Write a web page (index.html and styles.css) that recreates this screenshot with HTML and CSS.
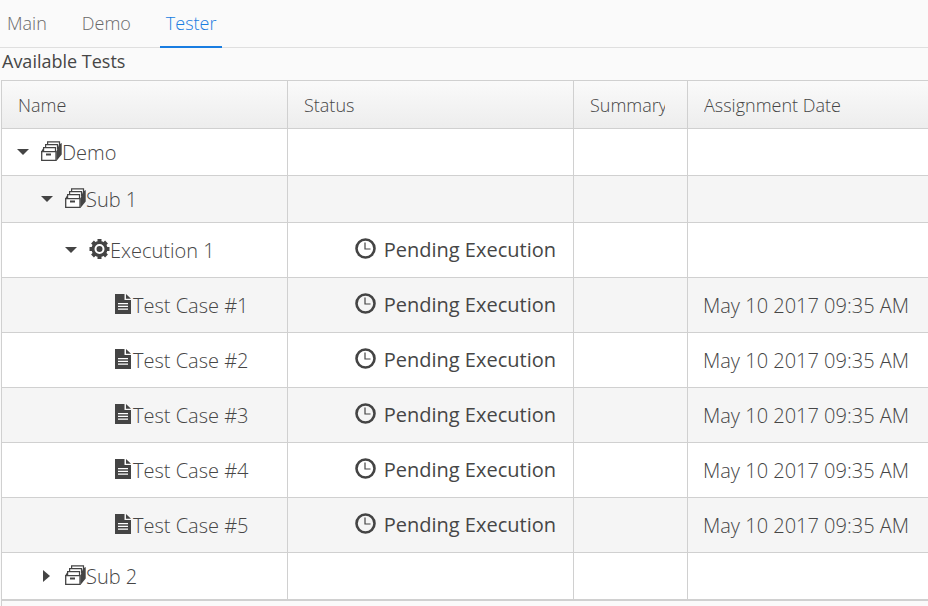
FILE: index.html
```html
<!DOCTYPE html>
<html lang="en">
    <head>
        <meta charset="utf-8">
        <title>Tester</title>
        <link rel="stylesheet" href="styles.css">
    </head>
    <body>

    <!-- shared icons -->
    <svg class="sprite" aria-hidden="true">
        <symbol id="archives" viewBox="0 0 21 20">
            <path fill="#fff" stroke="#444" stroke-width="1.200" d="M6.600 4V.8h11.900V5M4.600 7V3.700h11.900V8M2.600 10V6.600h11.900V10"/>
            <path fill="#444" d="M15.400 10.500L18 3.500 20.700 2v11.500L15.400 20zM0 10.800L2 7.500h1v3.300z"/>
            <path fill="#fff" stroke="#444" stroke-width="1.300" d="M.7 10.700h14.300v8.600H.7z"/>
            <path fill="#444" d="M5 12.500h5v2H5z"/>
        </symbol>
        <symbol id="cog" viewBox="0 0 20 20">
            <path stroke="#444" stroke-width="4" d="M10 0v20M0 10h20"/>
            <path stroke="#444" stroke-width="4" d="M3 3l14 14M17 3L3 17"/>
            <circle cx="10" cy="10" r="8" fill="#444"/>
            <circle cx="10" cy="10" r="4" fill="#444" stroke="#fff" stroke-width="2"/>
        </symbol>
        <symbol id="file" viewBox="0 0 16 20">
            <path fill="#444" d="M0 0h9.500v6H16v14H0zM11 0l5 4.700h-5z"/>
            <path stroke="#fff" stroke-width="1.200" d="M3 9.600h10M3 12.400h10M3 15.200h10"/>
        </symbol>
        <symbol id="clock" viewBox="0 0 21 21">
            <circle cx="10.500" cy="10.500" r="9" fill="none" stroke="#444" stroke-width="2.600"/>
            <path fill="none" stroke="#444" stroke-width="1.200" d="M10 4.500v6.500h5.500"/>
        </symbol>
    </svg>

    <div class="tabs" role="tablist">
        <button class="tab" role="tab">Main</button>
        <button class="tab" role="tab">Demo</button>
        <button class="tab selected" role="tab" aria-selected="true">Tester</button>
    </div>

    <table class="tests">
        <caption>Available Tests</caption>
        <colgroup>
            <col class="col-name">
            <col class="col-status">
            <col class="col-summary">
            <col>
        </colgroup>
        <thead>
            <tr>
                <th><div class="head">Name</div></th>
                <th><div class="head">Status</div></th>
                <th><div class="head">Summary</div></th>
                <th><div class="head">Assignment Date</div></th>
            </tr>
        </thead>
        <tbody>
            <tr class="folder">
                <td><div class="node level1"><button class="toggle open" aria-label="Collapse Demo"></button><svg class="icon"><use href="#archives"/></svg>Demo</div></td>
                <td></td>
                <td></td>
                <td></td>
            </tr>
            <tr class="folder">
                <td><div class="node level2"><button class="toggle open" aria-label="Collapse Sub 1"></button><svg class="icon"><use href="#archives"/></svg>Sub 1</div></td>
                <td></td>
                <td></td>
                <td></td>
            </tr>
            <tr>
                <td><div class="node level3"><button class="toggle open" aria-label="Collapse Execution 1"></button><svg class="icon"><use href="#cog"/></svg>Execution 1</div></td>
                <td><div class="status"><svg class="clock"><use href="#clock"/></svg>Pending Execution</div></td>
                <td></td>
                <td></td>
            </tr>
            <tr>
                <td><div class="node level4"><svg class="file"><use href="#file"/></svg>Test Case #1</div></td>
                <td><div class="status"><svg class="clock"><use href="#clock"/></svg>Pending Execution</div></td>
                <td></td>
                <td>May 10 2017 09:35 AM</td>
            </tr>
            <tr>
                <td><div class="node level4"><svg class="file"><use href="#file"/></svg>Test Case #2</div></td>
                <td><div class="status"><svg class="clock"><use href="#clock"/></svg>Pending Execution</div></td>
                <td></td>
                <td>May 10 2017 09:35 AM</td>
            </tr>
            <tr>
                <td><div class="node level4"><svg class="file"><use href="#file"/></svg>Test Case #3</div></td>
                <td><div class="status"><svg class="clock"><use href="#clock"/></svg>Pending Execution</div></td>
                <td></td>
                <td>May 10 2017 09:35 AM</td>
            </tr>
            <tr>
                <td><div class="node level4"><svg class="file"><use href="#file"/></svg>Test Case #4</div></td>
                <td><div class="status"><svg class="clock"><use href="#clock"/></svg>Pending Execution</div></td>
                <td></td>
                <td>May 10 2017 09:35 AM</td>
            </tr>
            <tr>
                <td><div class="node level4"><svg class="file"><use href="#file"/></svg>Test Case #5</div></td>
                <td><div class="status"><svg class="clock"><use href="#clock"/></svg>Pending Execution</div></td>
                <td></td>
                <td>May 10 2017 09:35 AM</td>
            </tr>
            <tr class="folder">
                <td><div class="node level2"><button class="toggle" aria-label="Expand Sub 2"></button><svg class="icon"><use href="#archives"/></svg>Sub 2</div></td>
                <td></td>
                <td></td>
                <td></td>
            </tr>
        </tbody>
        <tfoot>
            <tr><td colspan="4"></td></tr>
        </tfoot>
    </table>

    </body>
</html>
```
FILE: styles.css
```css
* {
    box-sizing: border-box;
}
body {
    margin: 0;
    background-color: #fafafa;
    color: #464646;
    font-family: "Open Sans", sans-serif;
    font-size: 20px;
    font-weight: 300;
    overflow: hidden;
}
.sprite {
    display: none;
}
.tabs {
    display: flex;
    gap: 23px;
    height: 48px;
    padding-left: 1px;
    box-shadow: inset 0 -1px #dfdfdf;
}
.tab {
    padding: 0 6px;
    border: none;
    border-bottom: 2px solid transparent;
    background: none;
    color: #696969;
    font: inherit;
    font-size: 18px;
}
.tab.selected {
    border-color: #197de1;
    color: #197de1;
}
.tests {
    width: 100%;
    padding-left: 1px;
    table-layout: fixed;
    border-spacing: 0;
}
.tests caption {
    height: 32px;
    padding-left: 2px;
    font-size: 18px;
    font-weight: 400;
    line-height: 26px;
    text-align: left;
}
.col-name {
    width: 287px;
}
.col-status {
    width: 286px;
}
.col-summary {
    width: 114px;
}
.tests th {
    height: 49px;
    padding: 0 22px 0 16px;
    border-top: 1px solid #d0d0d0;
    border-right: 1px solid #d0d0d0;
    border-bottom: 1px solid #d0d0d0;
    background: linear-gradient(#fafafa, #ededed);
    font-size: 18px;
    font-weight: 300;
    text-align: left;
}
.head {
    overflow: hidden;
    white-space: nowrap;
}
.tests td {
    height: 55px;
    padding: 0 0 0 15px;
    border-right: 1px solid #d0d0d0;
    border-bottom: 1px solid #d0d0d0;
    background-color: #fff;
    white-space: nowrap;
}
.tests th:first-child,
.tests td:first-child {
    border-left: 1px solid #d0d0d0;
}
.tests th:last-child,
.tests td:last-child {
    border-right: none;
}
.tests .folder td {
    height: 47px;
}
.tests tbody tr:nth-child(even) td {
    background-color: #f5f5f5;
}
.tests tfoot td {
    height: 20px;
    border-top: 1px solid #d0d0d0;
    background-color: #fafafa;
}
.node,
.status {
    display: flex;
    align-items: center;
}
.level2 {
    padding-left: 24px;
}
.level3 {
    padding-left: 48px;
}
.level4 {
    padding-left: 98px;
}
.toggle {
    width: 24px;
    height: 24px;
    padding: 0;
    border: none;
    background: none;
}
.toggle::before {
    content: "";
    display: block;
    width: 7px;
    height: 12px;
    margin-left: 2px;
    background-color: #444;
    clip-path: polygon(0 0, 100% 50%, 0 100%);
}
.toggle.open::before {
    width: 12px;
    height: 6px;
    margin-left: 0;
    clip-path: polygon(0 0, 100% 0, 50% 100%);
}
.icon {
    width: 21px;
    height: 20px;
    margin-bottom: 2px;
}
.file {
    width: 16px;
    height: 20px;
    margin: 0 2px 2px 0;
}
.status {
    justify-content: flex-end;
    padding: 0 17px 2px 0;
    font-weight: 400;
}
.clock {
    width: 21px;
    height: 21px;
    margin: 0 8px 2px 0;
}
```
